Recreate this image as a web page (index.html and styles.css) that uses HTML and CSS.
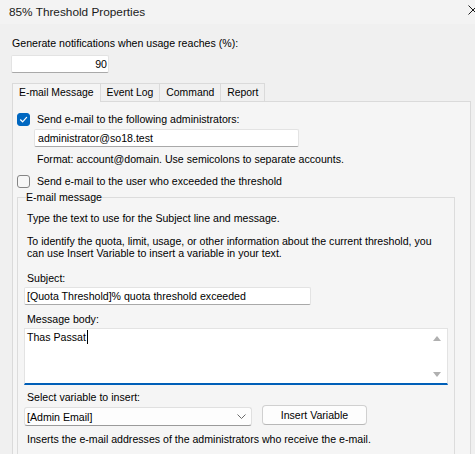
FILE: index.html
```html
<!DOCTYPE html>
<html>
<head>
<meta charset="utf-8">
<title>85% Threshold Properties</title>
<link rel="stylesheet" href="styles.css">
</head>
<body>
<div class="window">
  <div class="titlebar">
    <span class="title">85% Threshold Properties</span>
    <svg class="close" width="10" height="10" viewBox="0 0 10 10"><path d="M0.5 0.5 L9.5 9.5 M9.5 0.5 L0.5 9.5" stroke="#1a1a1a" stroke-width="1" fill="none"/></svg>
  </div>
  <div class="content">
    <div class="label top-label">Generate notifications when usage reaches (%):</div>
    <div class="field num">90</div>
    <div class="tabs">
      <div class="tab active">E-mail Message</div>
      <div class="tab">Event Log</div>
      <div class="tab">Command</div>
      <div class="tab">Report</div>
    </div>
    <div class="panel">
      <div class="check-row">
        <span class="cb on"><svg width="11" height="11" viewBox="0 0 11 11"><path d="M2.5 5.8 L4.6 7.8 L8.6 3.4" stroke="#fff" stroke-width="1.2" fill="none" stroke-linecap="round" stroke-linejoin="round"/></svg></span>
        <span>Send e-mail to the following administrators:</span>
      </div>
      <div class="field email">administrator@so18.test</div>
      <div class="label hint">Format: account@domain. Use semicolons to separate accounts.</div>
      <div class="check-row second">
        <span class="cb"></span>
        <span>Send e-mail to the user who exceeded the threshold</span>
      </div>
      <fieldset class="group">
        <legend>E-mail message</legend>
        <div class="label p1">Type the text to use for the Subject line and message.</div>
        <div class="label p2">To identify the quota, limit, usage, or other information about the current threshold, you<br>can use Insert Variable to insert a variable in your text.</div>
        <div class="label p3">Subject:</div>
        <div class="field subject">[Quota Threshold]% quota threshold exceeded</div>
        <div class="label p4">Message body:</div>
        <div class="body-box">
          <div class="body-text">Thas Passat<span class="caret"></span></div>
          <div class="scroll">
            <svg width="8" height="5" viewBox="0 0 8 5"><path d="M0 5 L4 0 L8 5 Z" fill="#b0b0b0"/></svg>
            <svg width="8" height="5" viewBox="0 0 8 5"><path d="M0 0 L4 5 L8 0 Z" fill="#b0b0b0"/></svg>
          </div>
        </div>
        <div class="label p5">Select variable to insert:</div>
        <div class="var-row">
          <div class="select">
            <span>[Admin Email]</span>
            <svg width="9" height="5" viewBox="0 0 9 5"><path d="M0.5 0.5 L4.5 4.5 L8.5 0.5" stroke="#6a6a6a" stroke-width="1" fill="none"/></svg>
          </div>
          <div class="btn">Insert Variable</div>
        </div>
        <div class="label p6">Inserts the e-mail addresses of the administrators who receive the e-mail.</div>
      </fieldset>
    </div>
  </div>
</div>
</body>
</html>
```
FILE: styles.css
```css
* { box-sizing: border-box; }
html, body { margin: 0; padding: 0; }
body {
  width: 475px;
  height: 454px;
  overflow: hidden;
  background: #f0f0f0;
  font-family: "Liberation Sans", Arial, sans-serif;
  font-size: 10.6px;
  color: #000;
}
.window { width: 475px; height: 454px; overflow: hidden; }
.titlebar {
  height: 24px;
  background: #f3f3f3;
  display: flex;
  align-items: flex-start;
  justify-content: space-between;
  padding-left: 9px;
}
.title { font-size: 11.8px; line-height: 14px; margin-top: 5px; color: #1a1a1a; }
.close { margin-right: -3px; margin-top: 5px; flex: none; }

.content { padding: 12px 0 0 11px; }
.label { line-height: 14px; height: 14px; white-space: nowrap; }
.top-label { margin-left: 1px; }

.field {
  background: #fff;
  border: 1px solid #e3e3e3;
  border-bottom-color: #a9a9a9;
  border-radius: 2px;
  height: 18px;
  line-height: 16px;
  padding: 0 2px;
  white-space: nowrap;
}
.num { width: 98px; margin-top: 5px; text-align: right; padding-right: 1px; }

.tabs { display: flex; align-items: flex-start; margin: 10px 0 0 1px; }
.tab {
  height: 18px;
  line-height: 17px;
  padding: 0 6px;
  font-size: 10.4px;
  border: 1px solid #dadada;
  border-bottom: none;
  margin-right: -1px;
  background: #f0f0f0;
}
.tab.active {
  height: 19px;
  margin-bottom: -1px;
  background: #f5f5f5;
  position: relative;
  z-index: 1;
}

.panel {
  margin-left: 1px;
  width: 459px;
  height: 360px;
  border: 1px solid #dadada;
  background: #f5f5f5;
  padding: 10px 0 0 4px;
}
.check-row { display: flex; align-items: center; gap: 7px; height: 14px; line-height: 14px; white-space: nowrap; }
.check-row.second { margin-top: 8px; }
.cb {
  width: 13px;
  height: 13px;
  border: 1px solid #858585;
  border-radius: 3px;
  background: #f7f7f7;
  flex: none;
  display: flex;
  align-items: center;
  justify-content: center;
}
.cb.on { background: #0067c0; border-color: #0067c0; }

.email { width: 265px; margin: 3px 0 0 17px; padding-left: 3px; }
.hint { margin: 5px 0 0 20px; }

.group {
  margin: 2px 0 0 0;
  width: 438px;
  height: 300px;
  border: 1px solid #dcdcdc;
  padding: 0 0 0 6px;
  min-width: 0;
}
.group legend { padding: 0; margin-left: 2px; line-height: 14px; }
.p1, .p2, .p3, .p4, .p5, .p6 { padding-left: 3px; }
.p1 { margin-top: 7px; }
.p2 { margin-top: 10px; height: auto; line-height: 12px; }
.p3 { margin-top: 12px; }
.subject { width: 287px; margin-top: 2px; }
.p4 { margin-top: 7px; }

.body-box {
  margin-top: 2px;
  width: 424px;
  height: 57px;
  background: #fff;
  border: 1px solid #e3e3e3;
  border-bottom: 2px solid #005fb8;
  display: flex;
}
.body-text { flex: 1; padding: 1px 0 0 2px; line-height: 14px; white-space: nowrap; }
.caret { display: inline-block; width: 1px; height: 14px; background: #000; vertical-align: -3px; margin-left: 1px; }
.scroll {
  width: 20px;
  display: flex;
  flex-direction: column;
  align-items: center;
  justify-content: space-between;
  padding: 7px 0 6px;
}

.p5 { margin-top: 5px; }
.var-row { display: flex; align-items: flex-start; margin-top: 1px; }
.select {
  margin-top: 2px;
  width: 228px;
  height: 19px;
  background: #fdfdfd;
  border: 1px solid #e0e0e0;
  border-bottom-color: #9a9a9a;
  border-radius: 3px;
  display: flex;
  align-items: center;
  justify-content: space-between;
  padding: 0 5px 0 2px;
  white-space: nowrap;
}
.btn {
  margin-left: 10px;
  width: 105px;
  height: 20px;
  line-height: 18px;
  text-align: center;
  background: #fdfdfd;
  border: 1px solid #d0d0d0;
  border-bottom-color: #b8b8b8;
  border-radius: 4px;
  white-space: nowrap;
}
.p6 { margin-top: 6px; }
```
